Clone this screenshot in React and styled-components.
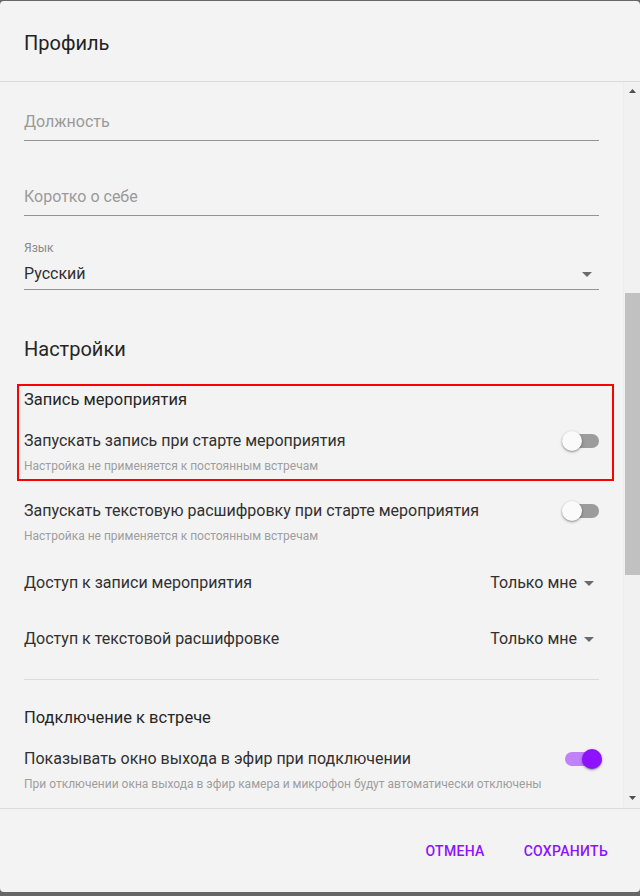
import React from 'react';
import styled, { createGlobalStyle, css } from 'styled-components';

const PURPLE = '#8f12ff';

const GlobalStyle = createGlobalStyle`
  html, body {
    margin: 0;
    background: #676767;
  }
  body {
    font-family: Roboto, "Noto Sans", Arial, sans-serif;
    color: #303030;
  }
  * {
    box-sizing: border-box;
  }
`;

const Dialog = styled.div`
  margin-top: 1px;
  width: 640px;
  height: 891px;
  background: #f3f3f3;
  border-radius: 4px;
  display: flex;
  flex-direction: column;
  overflow: hidden;
`;

const Header = styled.div`
  height: 81px;
  flex-shrink: 0;
  padding: 28px 24px 0;
  border-bottom: 1px solid #dadada;
`;

const Title = styled.h2`
  margin: 0;
  font-size: 20px;
  line-height: 28px;
  font-weight: 400;
  color: #222;
`;

const Body = styled.div`
  height: 727px;
  flex-shrink: 0;
  display: flex;
  border-bottom: 1px solid #dadada;
`;

const Content = styled.div`
  flex: 1;
  padding: 24px 24px 0;
  overflow: hidden;
  display: flex;
  flex-direction: column;
`;

const TextInput = styled.div`
  margin-top: ${p => p.gap || 0}px;
  padding: 6px 0 8px;
  font-size: 16px;
  line-height: 20px;
  color: #9a9a9a;
  border-bottom: 1px solid #949494;
`;

const SelectField = styled.div`
  margin-top: ${p => p.gap || 0}px;
  border-bottom: 1px solid #949494;
`;

const FieldLabel = styled.div`
  font-size: 12px;
  line-height: 14px;
  color: #8a8a8a;
`;

const SelectValue = styled.div`
  display: flex;
  align-items: center;
  justify-content: space-between;
  padding: 9px 0 5px;
  font-size: 16px;
  line-height: 20px;
  color: #303030;

  svg {
    margin: -2px 0;
  }
`;

const SectionTitle = styled.h3`
  margin: 45px 0 0;
  font-size: 20px;
  line-height: 28px;
  font-weight: 400;
  color: #262626;
`;

const Highlight = styled.div`
  margin: 21px -15px 0 -7px;
  padding: 4px 13px 6px 5px;
  border: 2px solid #ff0000;
`;

const GroupTitle = styled.div`
  margin-top: ${p => p.gap || 0}px;
  font-size: 16.5px;
  line-height: 20px;
  font-weight: 400;
  color: #262626;
`;

const Option = styled.div`
  margin-top: ${p => p.gap || 0}px;
  display: flex;
  flex-direction: column;
`;

const OptionLine = styled.div`
  display: flex;
  align-items: center;
  justify-content: space-between;
  font-size: 16px;
  line-height: 20px;
  color: #303030;
`;

const Hint = styled.div`
  margin-top: 8px;
  font-size: 12px;
  line-height: 14px;
  color: #9e9e9e;
`;

const SwitchRoot = styled.span`
  position: relative;
  flex-shrink: 0;
  width: 40px;
  height: 20px;
  margin-right: -3px;
`;

const SwitchTrack = styled.span`
  position: absolute;
  left: 3px;
  top: 3px;
  width: 34px;
  height: 14px;
  border-radius: 7px;
  background: ${p => (p.on ? 'rgba(143, 18, 255, 0.5)' : '#9c9c9c')};
`;

const SwitchThumb = styled.span`
  position: absolute;
  top: 0;
  left: ${p => (p.on ? 20 : 0)}px;
  width: 20px;
  height: 20px;
  border-radius: 50%;
  background: ${p => (p.on ? PURPLE : '#fafafa')};
  box-shadow: 0 1px 3px rgba(0, 0, 0, 0.35), 0 1px 1px rgba(0, 0, 0, 0.14);
`;

const AccessRow = styled.div`
  margin-top: ${p => p.gap || 0}px;
  height: 56px;
  display: flex;
  align-items: center;
  justify-content: space-between;
  font-size: 16px;
  line-height: 20px;
  color: #303030;
`;

const AccessValue = styled.span`
  display: flex;
  align-items: center;
  margin-right: -2px;
`;

const Divider = styled.hr`
  margin: 12px 0 0;
  border: 0;
  border-top: 1px solid #dadada;
`;

const Scrollbar = styled.div`
  width: 17px;
  flex-shrink: 0;
  display: flex;
  flex-direction: column;
  background: #f1f1f1;
  border-left: 1px solid #ececec;
`;

const ScrollButton = styled.div`
  height: 17px;
  display: flex;
  align-items: center;
  justify-content: center;
  ${p => p.down && css`
    align-items: flex-end;
    padding-bottom: 8px;
  `}
`;

const ScrollTrack = styled.div`
  flex: 1;
`;

const ScrollThumb = styled.div`
  margin: 194px 0 0 1px;
  width: 15px;
  height: 282px;
  background: #c1c1c1;
`;

const Footer = styled.div`
  flex: 1;
  display: flex;
  align-items: center;
  justify-content: flex-end;
  gap: 23px;
  padding: 0 24px 0 0;
`;

const TextButton = styled.button`
  border: 0;
  background: none;
  padding: 6px 8px;
  font-family: inherit;
  font-size: 14px;
  line-height: 20px;
  font-weight: 500;
  letter-spacing: 0.3px;
  text-transform: uppercase;
  color: ${PURPLE};
  cursor: pointer;
`;

function DropIcon() {
  return (
    <svg width="24" height="24" viewBox="0 0 24 24" fill="#6b6b6b">
      <path d="M7 10l5 5 5-5z" />
    </svg>
  );
}

function Arrow({ down }) {
  return (
    <svg width="7" height="4" viewBox="0 0 7 4" fill="#505050">
      <path d={down ? 'M0 0h7L3.5 4z' : 'M3.5 0L7 4H0z'} />
    </svg>
  );
}

function Switch({ on }) {
  return (
    <SwitchRoot>
      <SwitchTrack on={on} />
      <SwitchThumb on={on} />
    </SwitchRoot>
  );
}

function ToggleOption({ label, hint, on, gap }) {
  return (
    <Option gap={gap}>
      <OptionLine>
        <span>{label}</span>
        <Switch on={on} />
      </OptionLine>
      <Hint>{hint}</Hint>
    </Option>
  );
}

const HINT = 'Настройка не применяется к постоянным встречам';

export default function App() {
  return (
    <>
      <GlobalStyle />
      <Dialog>
        <Header>
          <Title>Профиль</Title>
        </Header>
        <Body>
          <Content>
            <TextInput>Должность</TextInput>
            <TextInput gap={40}>Коротко о себе</TextInput>
            <SelectField gap={25}>
              <FieldLabel>Язык</FieldLabel>
              <SelectValue>
                <span>Русский</span>
                <DropIcon />
              </SelectValue>
            </SelectField>

            <SectionTitle>Настройки</SectionTitle>

            <Highlight>
              <GroupTitle>Запись мероприятия</GroupTitle>
              <ToggleOption gap={21} label="Запускать запись при старте мероприятия" hint={HINT} />
            </Highlight>

            <ToggleOption
              gap={20}
              label="Запускать текстовую расшифровку при старте мероприятия"
              hint={HINT}
            />

            <AccessRow gap={12}>
              <span>Доступ к записи мероприятия</span>
              <AccessValue>Только мне<DropIcon /></AccessValue>
            </AccessRow>
            <AccessRow>
              <span>Доступ к текстовой расшифровке</span>
              <AccessValue>Только мне<DropIcon /></AccessValue>
            </AccessRow>

            <Divider />

            <GroupTitle gap={28}>Подключение к встрече</GroupTitle>
            <ToggleOption
              gap={21}
              on
              label="Показывать окно выхода в эфир при подключении"
              hint="При отключении окна выхода в эфир камера и микрофон будут автоматически отключены"
            />
          </Content>
          <Scrollbar>
            <ScrollButton><Arrow /></ScrollButton>
            <ScrollTrack>
              <ScrollThumb />
            </ScrollTrack>
            <ScrollButton down><Arrow down /></ScrollButton>
          </Scrollbar>
        </Body>
        <Footer>
          <TextButton>Отмена</TextButton>
          <TextButton>Сохранить</TextButton>
        </Footer>
      </Dialog>
    </>
  );
}
